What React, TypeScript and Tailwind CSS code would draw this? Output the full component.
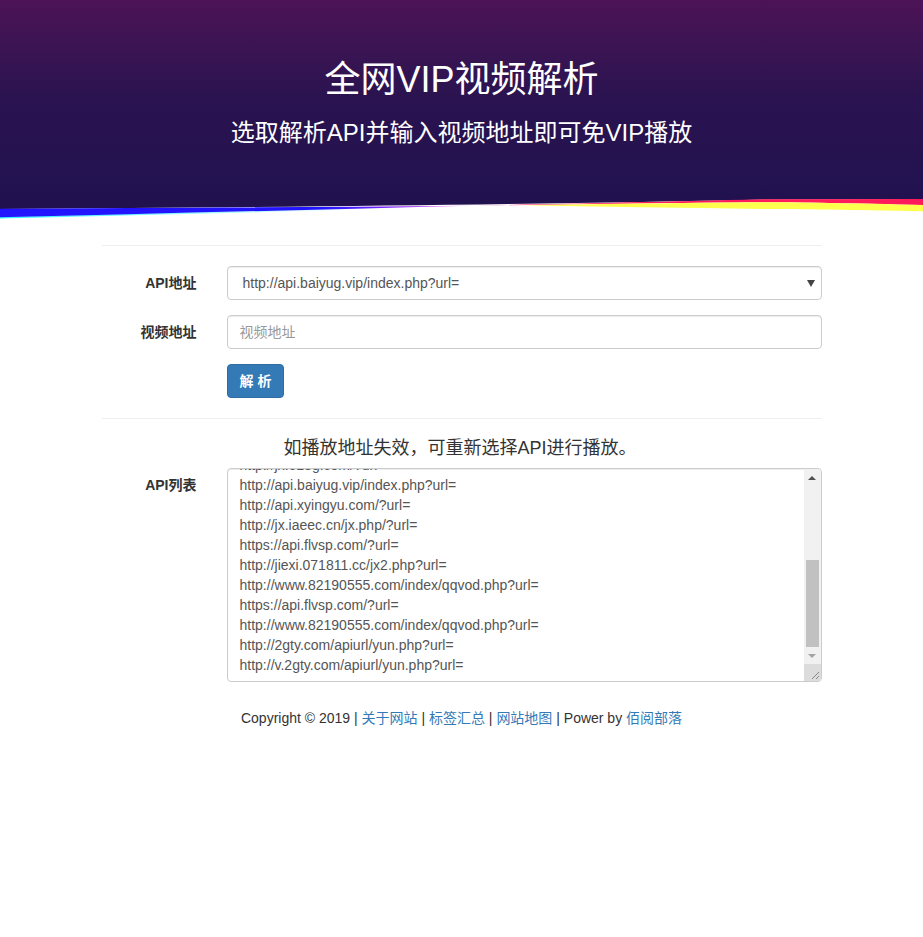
import React from 'react';

const apiList = [
  'http://jx.618g.com/?url=',
  'http://api.baiyug.vip/index.php?url=',
  'http://api.xyingyu.com/?url=',
  'http://jx.iaeec.cn/jx.php/?url=',
  'https://api.flvsp.com/?url=',
  'http://jiexi.071811.cc/jx2.php?url=',
  'http://www.82190555.com/index/qqvod.php?url=',
  'https://api.flvsp.com/?url=',
  'http://www.82190555.com/index/qqvod.php?url=',
  'http://2gty.com/apiurl/yun.php?url=',
  'http://v.2gty.com/apiurl/yun.php?url=',
];

const font = { fontFamily: '"Liberation Sans", "Noto Sans CJK SC", sans-serif' };

function Wave() {
  return (
    <svg className="block w-full h-[25px]" viewBox="0 0 923 25" preserveAspectRatio="none">
      <defs>
        <linearGradient id="blueFade" x1="0" y1="0" x2="1" y2="0">
          <stop offset="0" stopColor="#2214ff" />
          <stop offset="0.7" stopColor="#2214ff" />
          <stop offset="1" stopColor="#e23cf5" />
        </linearGradient>
        <linearGradient id="cyanFade" x1="0" y1="0" x2="1" y2="0">
          <stop offset="0" stopColor="#33f5ff" />
          <stop offset="0.5" stopColor="#a8f8ff" />
          <stop offset="1" stopColor="#ffffff" stopOpacity="0" />
        </linearGradient>
        <linearGradient id="redFade" x1="0" y1="0" x2="1" y2="0">
          <stop offset="0" stopColor="#c01ec8" />
          <stop offset="0.2" stopColor="#ff1a5c" />
          <stop offset="1" stopColor="#ff1a5c" />
        </linearGradient>
      </defs>
      <path d="M0,0 H923 V4 L763,4.4 C560,9 300,12 0,14 Z" fill="#21124f" />
      <path d="M0,22.8 C150,19.5 300,16 460,11.2" stroke="url(#cyanFade)" strokeWidth="1.6" fill="none" />
      <path d="M0,13.8 C150,13 300,12 460,10.9 C300,15 150,18.8 0,22.3 Z" fill="url(#blueFade)" />
      <path d="M440,11.1 C540,9.6 640,7.2 763,4.3 L923,4 L923,10 C850,8.4 800,7.3 763,7.3 C650,8 560,9.6 440,11.1 Z" fill="url(#redFade)" />
      <path d="M520,10.3 C620,9 700,7.7 763,7.3 C800,7.3 850,8.4 923,10 L923,16.2 C850,15 800,14 763,14 C680,12.8 600,11.6 520,10.3 Z" fill="#ffff4d" />
    </svg>
  );
}

export default function App() {
  return (
    <div className="min-h-[937px] bg-white text-[14px] text-[#333]" style={font}>
      {/* Header */}
      <div className="h-[195px] bg-gradient-to-b from-[#4c1356] via-[#2a1350] to-[#21124f] text-white flex flex-col items-center">
        <h1 className="mt-[60px] text-[36px] leading-[40px] font-normal">全网VIP视频解析</h1>
        <h3 className="mt-[20px] text-[24px] leading-[26px] font-normal">选取解析API并输入视频地址即可免VIP播放</h3>
      </div>
      <Wave />

      <div className="w-[720px] mx-auto mt-[25px]">
        <div className="border-t border-[#eee]" />

        <div className="grid grid-cols-[95px_1fr] gap-x-[30px] gap-y-[15px] mt-[20px]">
          <label className="text-right font-bold pt-[7px] leading-[20px]">API地址</label>
          <div className="h-[34px] border border-[#ccc] rounded-[4px] shadow-[inset_0_1px_1px_rgba(0,0,0,0.075)] flex items-center justify-between pl-[15px] pr-[6px] text-[#555]">
            <span>http://api.baiyug.vip/index.php?url=</span>
            <span className="w-0 h-0 border-l-[4px] border-r-[4px] border-t-[7px] border-l-transparent border-r-transparent border-t-[#444]" />
          </div>

          <label className="text-right font-bold pt-[7px] leading-[20px]">视频地址</label>
          <input
            placeholder="视频地址"
            className="h-[34px] border border-[#ccc] rounded-[4px] shadow-[inset_0_1px_1px_rgba(0,0,0,0.075)] px-[12px] text-[#555] placeholder:text-[#999] outline-none"
          />

          <div />
          <div>
            <button className="h-[34px] px-[12px] bg-[#337ab7] border border-[#2e6da4] rounded-[4px] text-white font-bold">
              解 析
            </button>
          </div>
        </div>

        <div className="border-t border-[#eee] mt-[20px]" />

        <p className="mt-[17px] text-[18px] leading-[25px] text-center pr-[3px]">如播放地址失效，可重新选择API进行播放。</p>

        <div className="grid grid-cols-[95px_1fr] gap-x-[30px] mt-[7px]">
          <label className="text-right font-bold pt-[7px] leading-[20px]">API列表</label>
          <div className="h-[214px] border border-[#ccc] rounded-[4px] shadow-[inset_0_1px_1px_rgba(0,0,0,0.075)] flex overflow-hidden">
            <div className="flex-1 overflow-hidden pl-[12px] text-[#555]">
              <div className="-mt-[14px]">
                {apiList.map((url, i) => (
                  <div key={i} className="leading-[20px] h-[20px] whitespace-nowrap">{url}</div>
                ))}
              </div>
            </div>
            <div className="w-[17px] bg-[#f1f1f1] flex flex-col">
              <div className="h-[17px] flex items-center justify-center">
                <span className="w-0 h-0 border-l-[4px] border-r-[4px] border-b-[4px] border-l-transparent border-r-transparent border-b-[#505050]" />
              </div>
              <div className="h-[74px]" />
              <div className="h-[87px] mx-[2px] bg-[#c1c1c1]" />
              <div className="h-[17px] flex items-center justify-center">
                <span className="w-0 h-0 border-l-[4px] border-r-[4px] border-t-[4px] border-l-transparent border-r-transparent border-t-[#a3a3a3]" />
              </div>
              <div className="flex-1 bg-[#dcdcdc] relative">
                <svg className="absolute right-[1px] bottom-[1px]" width="9" height="9" viewBox="0 0 9 9">
                  <path d="M8,1 L1,8 M8,5 L5,8" stroke="#888" strokeWidth="1" />
                </svg>
              </div>
            </div>
          </div>
        </div>

        <p className="mt-[26px] leading-[20px] text-center">
          Copyright © 2019 | <a className="text-[#337ab7]">关于网站</a> | <a className="text-[#337ab7]">标签汇总</a> | <a className="text-[#337ab7]">网站地图</a> | Power by <a className="text-[#337ab7]">佰阅部落</a>
        </p>
      </div>
    </div>
  );
}
